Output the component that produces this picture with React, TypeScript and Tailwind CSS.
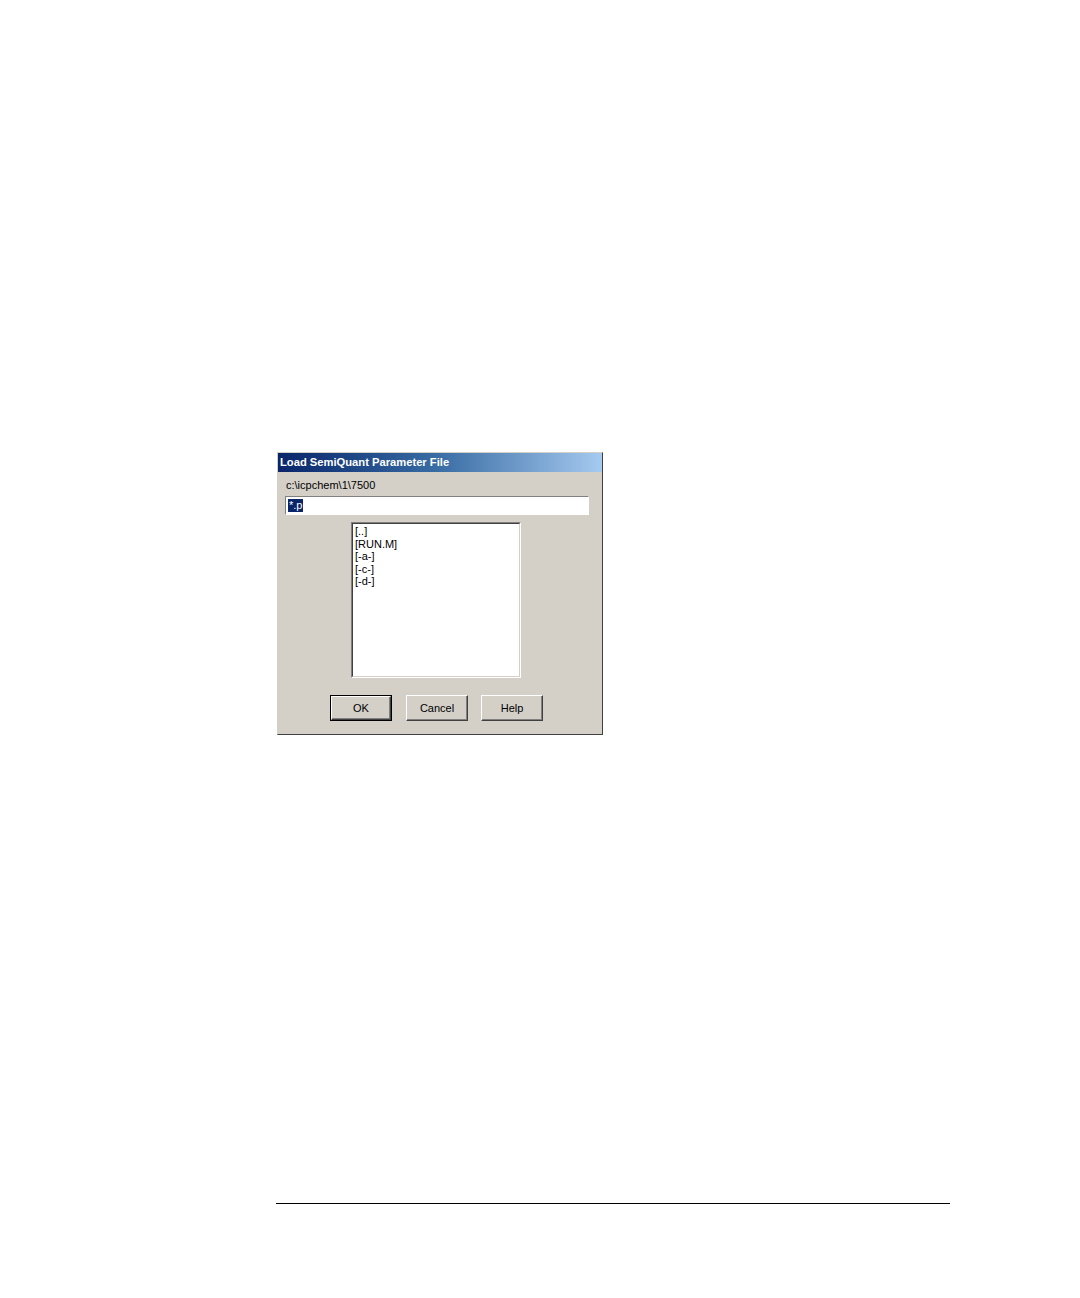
import React from 'react'

const items = ['[..]', '[RUN.M]', '[-a-]', '[-c-]', '[-d-]']

function Btn({ label, focused }: { label: string; focused?: boolean }) {
  return (
    <div className={focused ? 'border border-black' : ''}>
      <div
        className={[
          'flex h-[24px] items-center justify-center border-t border-l border-t-white border-l-white border-r border-b border-r-[#404040] border-b-[#404040] bg-[#d4d0c8] text-[11px] text-black shadow-[inset_-1px_-1px_0_#808080]',
          focused ? 'w-[60px]' : 'h-[26px] w-[62px]',
        ].join(' ')}
      >
        {label}
      </div>
    </div>
  )
}

export default function App() {
  return (
    <div className="relative h-[1298px] w-[1080px] bg-white" style={{ fontFamily: '"Liberation Sans", Arial, sans-serif' }}>
      <div className="pt-[452px] pl-[277px]">
        {/* Dialog */}
        <div className="flex h-[283px] w-[326px] flex-col border-r border-b border-r-[#404040] border-b-[#404040] border-l border-t border-l-[#d4d0c8] border-t-[#d4d0c8] bg-[#d4d0c8]">
          <div className="flex h-[19px] items-center bg-gradient-to-r from-[#0a246a] via-[#3a6ea5] to-[#a6caf0] pl-[2px] text-[11.2px] font-bold text-white">
            Load SemiQuant Parameter File
          </div>
          <div className="pl-[8px] pt-[7px] text-[11px] leading-[13px] text-black">c:\icpchem\1\7500</div>
          <div className="ml-[7px] mt-[4px] flex h-[19px] w-[304px] items-center border border-t-[#808080] border-l-[#808080] border-r-white border-b-white bg-white">
            <div className="ml-[2px] bg-[#0a246a] px-[1px] text-[11px] leading-[13px] text-white">*.p</div>
          </div>
          <div className="ml-[73px] mt-[7px] h-[156px] w-[170px] border border-t-[#808080] border-l-[#808080] border-r-white border-b-white">
            <div className="h-full w-full border border-t-[#404040] border-l-[#404040] border-r-[#d4d0c8] border-b-[#d4d0c8] bg-white pl-[2px] pt-[1px]">
              {items.map((t) => (
                <div key={t} className="text-[11px] leading-[12.5px] text-black">{t}</div>
              ))}
            </div>
          </div>
          <div className="ml-[52px] mt-[17px] flex">
            <Btn label="OK" focused />
            <div className="ml-[14px]"><Btn label="Cancel" /></div>
            <div className="ml-[13px]"><Btn label="Help" /></div>
          </div>
        </div>
      </div>
      {/* footer rule */}
      <div className="absolute left-[276px] top-[1203px] h-[1px] w-[674px] bg-black" />
    </div>
  )
}
